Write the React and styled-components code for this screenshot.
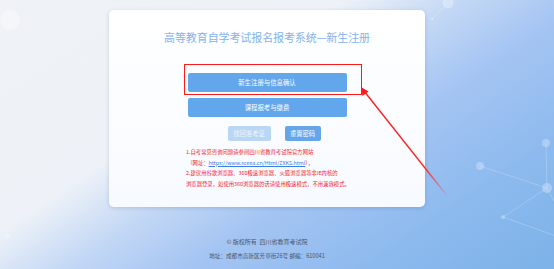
import React from 'react'
import styled, { createGlobalStyle } from 'styled-components'

const GlobalStyle = createGlobalStyle`
  html, body { margin: 0; padding: 0; }
  body {
    font-family: "Noto Sans CJK SC", "Noto Sans", "Liberation Sans", sans-serif;
    -webkit-font-smoothing: antialiased;
  }
`

const notes = [
  { id: 1, text: '1.自考常见咨询问题请参阅四川省教育考试院官方网站' },
  { id: 2, link: 'https://www.sceea.cn/Html/ZXKS.html' },
  { id: 3, text: '2.建议用谷歌浏览器、360极速浏览器、火狐浏览器等非IE内核的' },
  { id: 4, text: '浏览器登录，如使用360浏览器的话请使用极速模式，不用兼容模式。' },
]

const Network = () => (
  <Decor viewBox="0 0 554 269" preserveAspectRatio="none">
    <g stroke="rgba(255,255,255,0.35)" strokeWidth="0.6" fill="rgba(255,255,255,0.28)">
      <circle cx="10" cy="20" r="10" fill="rgba(255,255,255,0.35)" stroke="none" />
      <circle cx="7" cy="236" r="2.5" stroke="none" />
      <circle cx="82" cy="62" r="1" stroke="none" />
      <line x1="432" y1="19" x2="448" y2="3" />
      <circle cx="432" cy="19" r="1.3" stroke="none" />
      <circle cx="448" cy="3" r="5" />
      <line x1="480" y1="166" x2="547" y2="188" />
      <line x1="546" y1="143" x2="547" y2="188" />
      <line x1="547" y1="188" x2="503" y2="217" />
      <line x1="547" y1="188" x2="556" y2="205" />
      <line x1="503" y1="217" x2="556" y2="236" />
      <circle cx="480" cy="166" r="4" stroke="none" />
      <circle cx="546" cy="143" r="4" stroke="none" />
      <circle cx="547" cy="188" r="5" stroke="none" />
      <circle cx="503" cy="217" r="2" stroke="none" />
    </g>
  </Decor>
)

const Arrow = () => (
  <Pointer viewBox="0 0 554 269">
    <defs>
      <linearGradient id="fade" x1="362" y1="88" x2="448" y2="197" gradientUnits="userSpaceOnUse">
        <stop offset="0" stopColor="#ff1a1a" />
        <stop offset="0.75" stopColor="#ff2a2a" />
        <stop offset="1" stopColor="#ff4040" stopOpacity="0" />
      </linearGradient>
    </defs>
    <line x1="364" y1="91" x2="448" y2="197" stroke="url(#fade)" strokeWidth="1.4" />
    <polygon points="361,87 362.5,96 368.5,91.5" fill="#ff1a1a" />
  </Pointer>
)

export default function App() {
  return (
    <>
      <GlobalStyle />
      <Page>
        <Network />
        <Column>
          <Card>
            <Title>高等教育自学考试报名报考系统—新生注册</Title>
            <MainButtonWrap>
              <MainButton>新生注册与信息确认</MainButton>
              <Highlight />
            </MainButtonWrap>
            <MainButton $gap={6}>课程报考与缴费</MainButton>
            <SmallRow>
              <SmallButton $disabled $width={43}>找回准考证</SmallButton>
              <SmallButton $width={36}>重置密码</SmallButton>
            </SmallRow>
            <Notes>
              {notes.map((n) =>
                n.link ? (
                  <NoteLine key={n.id}>
                    &nbsp;（网址：<NoteLink>{n.link}</NoteLink>），
                  </NoteLine>
                ) : (
                  <NoteLine key={n.id}>{n.text}</NoteLine>
                )
              )}
            </Notes>
          </Card>
          <Footer>
            <FooterLine>© 版权所有&nbsp;&nbsp;四川省教育考试院</FooterLine>
            <FooterLine $small>地址：成都市高新区芳草街26号 邮编：610041</FooterLine>
          </Footer>
        </Column>
        <Arrow />
      </Page>
    </>
  )
}

const Page = styled.div`
  position: relative;
  width: 554px;
  height: 269px;
  overflow: hidden;
  background: linear-gradient(
    146deg,
    #eff2f7 0%,
    #eef2f8 36%,
    #c2d7f5 49%,
    #a5c5f3 61%,
    #8dbaee 80%,
    #7cb2e8 100%
  );
`

const Decor = styled.svg`
  position: absolute;
  inset: 0;
  width: 554px;
  height: 269px;
`

const Pointer = styled.svg`
  position: absolute;
  inset: 0;
  width: 554px;
  height: 269px;
  pointer-events: none;
  z-index: 3;
`

const Column = styled.div`
  position: relative;
  z-index: 1;
  width: 534px;
  display: flex;
  flex-direction: column;
  align-items: center;
`

const Card = styled.div`
  box-sizing: border-box;
  width: 316px;
  height: 197px;
  margin-top: 10px;
  border-radius: 5px;
  background: linear-gradient(180deg, #ffffff 0%, #f7faff 100%);
  box-shadow: 0 1px 4px rgba(40, 60, 110, 0.18);
  display: flex;
  flex-direction: column;
  align-items: center;
  padding-top: 20px;
`

const Title = styled.div`
  font-size: 11px;
  line-height: 14px;
  color: #84b3ec;
  letter-spacing: -0.1px;
  white-space: nowrap;
`

const MainButtonWrap = styled.div`
  position: relative;
  margin-top: 29px;
`

const MainButton = styled.div`
  width: 159px;
  height: 19px;
  margin-top: ${(p) => (p.$gap ? `${p.$gap}px` : 0)};
  border-radius: 2px;
  background: #62a6ec;
  color: #fff;
  font-size: 6.4px;
  display: flex;
  align-items: center;
  justify-content: center;
`

const Highlight = styled.div`
  position: absolute;
  left: -4px;
  top: -9px;
  width: 178px;
  height: 31px;
  box-sizing: border-box;
  border: 1.6px solid #ff1a1a;
  pointer-events: none;
`

const SmallRow = styled.div`
  display: flex;
  gap: 14px;
  margin-top: 9px;
  margin-left: 14px;
`

const SmallButton = styled.div`
  width: ${(p) => p.$width}px;
  height: 15px;
  border-radius: 2px;
  background: ${(p) => (p.$disabled ? '#bad6f5' : '#65a6ea')};
  color: ${(p) => (p.$disabled ? '#eef5fd' : '#fff')};
  font-size: 6.3px;
  display: flex;
  align-items: center;
  justify-content: center;
`

const Notes = styled.div`
  width: 166px;
  margin-top: 6px;
  margin-left: 4px;
  color: #f5222d;
  font-size: 5.35px;
  line-height: 10.7px;
`

const NoteLine = styled.div`
  white-space: nowrap;
`

const NoteLink = styled.span`
  color: #3a7ee6;
  text-decoration: underline;
`

const Footer = styled.div`
  margin-top: 30px;
  display: flex;
  flex-direction: column;
  align-items: center;
  gap: 4px;
`

const FooterLine = styled.div`
  font-size: ${(p) => (p.$small ? '5.6px' : '6px')};
  line-height: 10px;
  color: #4d5666;
  white-space: nowrap;
`
